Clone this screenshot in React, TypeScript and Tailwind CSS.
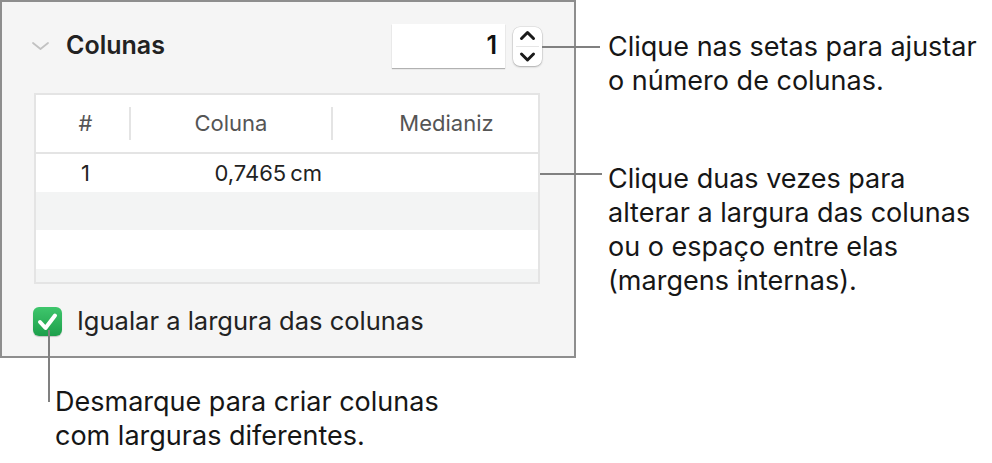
export default function App() {
  return (
    <div className="relative w-[992px] h-[463px] overflow-hidden bg-white font-[Inter,sans-serif] text-[#161616]">
      <div className="flex">
        {/* inspector panel */}
        <div className="w-[576px] h-[358px] shrink-0 border-2 border-[#8e8e8e] bg-[#f5f5f5]">
          <div className="mt-[22px] h-[44px] flex items-center pl-[30px] pr-[32px]">
            <svg width="17" height="8" viewBox="0 0 17 8" className="shrink-0">
              <path d="M1 1 L8.5 7 L16 1" fill="none" stroke="#c2c2c2" strokeWidth="1.8" strokeLinecap="round" strokeLinejoin="round" />
            </svg>
            <span className="ml-[17px] text-[25px] font-semibold text-[#222]">Colunas</span>
            <div className="ml-auto w-[113px] h-[44px] bg-white shadow-[0_1px_1px_rgba(0,0,0,0.28)] flex items-center justify-end pr-[8px] text-[25px] font-semibold text-[#111]">
              1
            </div>
            <div className="ml-[8px] w-[29px] h-[39px] rounded-[7px] bg-white shadow-[0_0_0_0.5px_rgba(0,0,0,0.12),0_1px_2px_rgba(0,0,0,0.25)]">
              <svg width="29" height="39" viewBox="0 0 29 39">
                <path d="M8.5 11.5 L14.5 5.5 L20.5 11.5" fill="none" stroke="#1a1a1a" strokeWidth="3" strokeLinecap="round" strokeLinejoin="round" />
                <line x1="3" y1="19.5" x2="26" y2="19.5" stroke="#e6e6e6" strokeWidth="1" />
                <path d="M8.5 27 L14.5 33 L20.5 27" fill="none" stroke="#1a1a1a" strokeWidth="3" strokeLinecap="round" strokeLinejoin="round" />
              </svg>
            </div>
          </div>

          <div className="mt-[25px] ml-[32px] w-[506px] border-2 border-[#e4e4e4] bg-white">
            <div className="h-[59px] border-b-2 border-[#e4e4e4] flex items-center text-[22px] text-[#555]">
              <div className="w-[93px] flex justify-center pl-[6px]">#</div>
              <div className="w-[2px] h-[33px] bg-[#e4e4e4]" />
              <div className="w-[200px] flex justify-center">Coluna</div>
              <div className="w-[2px] h-[33px] bg-[#e4e4e4]" />
              <div className="flex-1 flex justify-center pl-[22px]">Medianiz</div>
            </div>
            <div className="h-[38px] flex items-center text-[22px] text-[#222]">
              <div className="w-[93px] flex justify-center pl-[6px]">1</div>
              <div className="w-[202px] flex justify-end pr-[9px]">0,7465&#8201;cm</div>
            </div>
            <div className="h-[38px] bg-[#f3f4f4]" />
            <div className="h-[39px] bg-white" />
            <div className="h-[13px] bg-[#f3f4f4]" />
          </div>

          <div className="mt-[18px] ml-[31px] flex items-center">
            <div className="w-[29px] h-[29px] rounded-[6px] bg-gradient-to-b from-[#3ec66c] to-[#1c9f4b] shadow-[0_1px_1px_rgba(0,0,0,0.2)]">
              <svg width="29" height="29" viewBox="0 0 29 29">
                <path d="M7 15 L12.5 21 L22 8.5" fill="none" stroke="#fff" strokeWidth="4" strokeLinecap="round" strokeLinejoin="round" />
              </svg>
            </div>
            <span className="ml-[15px] text-[25.5px] text-[#222]">Igualar a largura das colunas</span>
          </div>
        </div>

        {/* right callouts */}
        <div className="pl-[32px] text-[27px] leading-[34px]">
          <p className="mt-[30px]">
            Clique nas setas para ajustar
            <br />o número de colunas.
          </p>
          <p className="mt-[64px]">
            Clique duas vezes para
            <br />
            alterar a largura das colunas
            <br />
            ou o espaço entre elas
            <br />
            (margens internas).
          </p>
        </div>
      </div>

      <p className="mt-[27px] ml-[55px] text-[27px] leading-[34px]">
        Desmarque para criar colunas
        <br />
        com larguras diferentes.
      </p>

      {/* leader lines */}
      <div className="absolute left-[542px] top-[46px] w-[58px] h-[2px] bg-[#808080]" />
      <div className="absolute left-[540px] top-[173px] w-[62px] h-[2px] bg-[#808080]" />
      <div className="absolute left-[48px] top-[330px] w-[2px] h-[72px] bg-[#808080]" />
    </div>
  );
}
